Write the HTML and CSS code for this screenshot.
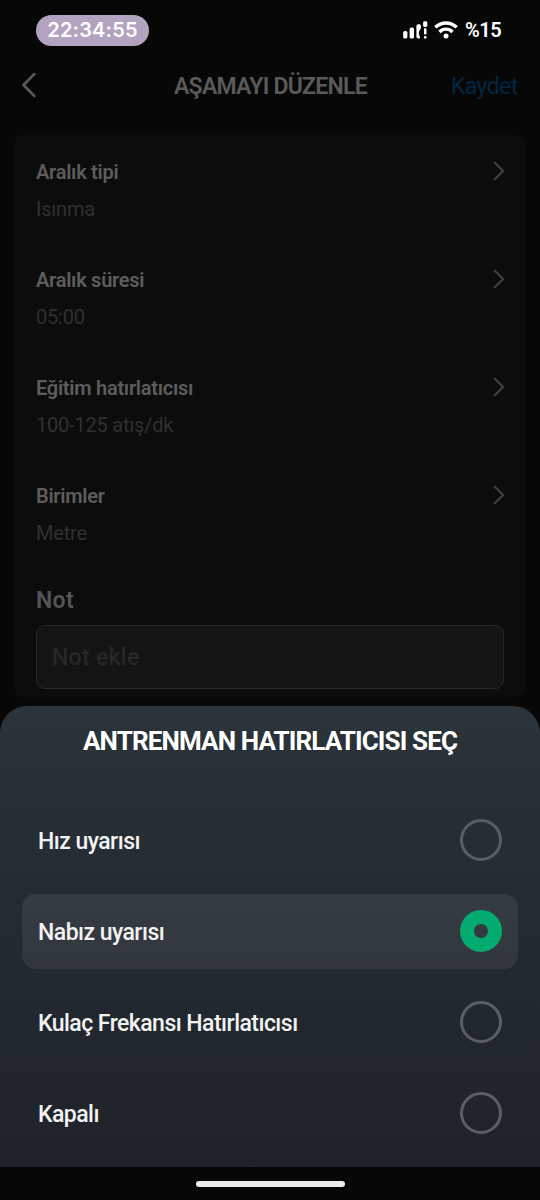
FILE: index.html
```
<!DOCTYPE html>
<html lang="tr">
<head>
<meta charset="utf-8">
<title>Aşamayı düzenle</title>
<link rel="stylesheet" href="styles.css">
</head>
<body>
<div class="screen">
  <div class="status">
    <span class="clock">22:34:55</span>
    <div class="status-icons">
      <svg class="signal" width="25" height="18" viewBox="0 0 25 18" fill="#fff">
        <rect x="0.2" y="10" width="4.2" height="7.6" rx="1.6"/>
        <rect x="6.6" y="6.6" width="4.4" height="11" rx="1.6"/>
        <path d="M15.200 3.200h1.200q1.500 0 1.500 1.500v2.600l-2 3.500v2.700l1.200 2.600q.3 1.500-1.200 1.500h-.7q-1.800 0-1.800-1.800V5q0-1.800 1.800-1.800Z"/>
        <rect x="20.100" y="0.300" width="4.200" height="5.700" rx="1.400"/>
        <rect x="21" y="7.200" width="2.500" height="6.300" rx=".8"/>
        <rect x="20.900" y="15" width="2.700" height="2.700" rx="1.100"/>
      </svg>
      <svg class="wifi" width="24" height="18" viewBox="0 0 24 18" fill="none" stroke="#fff" stroke-width="3.300">
        <path d="M1.300 6.300Q6 2 12 2t10.700 4.300"/>
        <path d="M5.500 11Q8.200 8.200 12 8.200T18.500 11"/>
        <circle cx="12" cy="15.100" r="2.500" fill="#fff" stroke="none"/>
      </svg>
      <span class="battery">%15</span>
    </div>
  </div>
  <header class="nav">
    <svg width="14" height="26" viewBox="0 0 14 26" fill="none" stroke="#5a5a5a" stroke-width="2.500" stroke-linecap="round" stroke-linejoin="round"><path d="M12.400 2 1.500 13l10.900 11"/></svg>
    <h1 class="nav-title">AŞAMAYI DÜZENLE</h1>
    <span class="save">Kaydet</span>
  </header>
  <main class="card">
    <div class="row">
      <div class="row-text"><span class="label">Aralık tipi</span><span class="value">Isınma</span></div>
      <svg class="chev" width="12" height="20" viewBox="0 0 12 20"><path d="m2.800 1.800 8.300 8.200-8.300 8.200"/></svg>
    </div>
    <div class="row">
      <div class="row-text"><span class="label">Aralık süresi</span><span class="value">05:00</span></div>
      <svg class="chev" width="12" height="20" viewBox="0 0 12 20"><path d="m2.800 1.800 8.300 8.200-8.300 8.200"/></svg>
    </div>
    <div class="row">
      <div class="row-text"><span class="label">Eğitim hatırlatıcısı</span><span class="value">100-125 atış/dk</span></div>
      <svg class="chev" width="12" height="20" viewBox="0 0 12 20"><path d="m2.800 1.800 8.300 8.200-8.300 8.200"/></svg>
    </div>
    <div class="row">
      <div class="row-text"><span class="label">Birimler</span><span class="value">Metre</span></div>
      <svg class="chev" width="12" height="20" viewBox="0 0 12 20"><path d="m2.800 1.800 8.300 8.200-8.300 8.200"/></svg>
    </div>
    <div class="note">
      <span class="note-label">Not</span>
      <div class="note-field"><span>Not ekle</span></div>
    </div>
  </main>
  <section class="sheet">
    <h2 class="sheet-title">ANTRENMAN HATIRLATICISI SEÇ</h2>
    <div class="options">
      <div class="option"><span>Hız uyarısı</span><i class="radio"></i></div>
      <div class="option selected"><span>Nabız uyarısı</span><i class="radio"></i></div>
      <div class="option"><span>Kulaç Frekansı Hatırlatıcısı</span><i class="radio"></i></div>
      <div class="option"><span>Kapalı</span><i class="radio"></i></div>
    </div>
  </section>
  <footer class="home"><div class="home-bar"></div></footer>
</div>
</body>
</html>
```
FILE: styles.css
```
* { box-sizing: border-box; }
body { margin: 0; background: #070707; font-family: Roboto, "Liberation Sans", sans-serif; }
h1, h2 { margin: 0; }
svg { display: block; flex: none; }
span { white-space: nowrap; }
.screen { width: 540px; height: 1200px; display: flex; flex-direction: column; overflow: hidden; }

.status { height: 60px; padding: 0 38px 0 36px; display: flex; justify-content: space-between; align-items: center; color: #fff; }
.clock { width: 113px; height: 31px; border-radius: 16px; background: #b2a3bf; font: 600 20px/31px Inter, sans-serif; text-align: center; letter-spacing: .2px; }
.status-icons { display: flex; align-items: center; }
.wifi { margin-left: 6px; }
.battery { margin-left: 7px; width: 37px; font-size: 20px; line-height: 24px; font-weight: 600; letter-spacing: -.5px; }

.nav { height: 75px; padding: 0 22px 25px; display: flex; align-items: center; }
.nav-title { margin-left: 138px; width: 193px; padding-top: 3px; font-size: 23px; line-height: 28px; font-weight: 600; color: #5a5a5a; white-space: nowrap; letter-spacing: -.75px; }
.save { margin-left: 84px; padding-top: 3px; font-size: 23px; line-height: 28px; color: #012542; letter-spacing: -.6px; }

.card { margin: 0 14px; height: 562px; flex: none; border-radius: 9px; background: #0c0c0c; padding: 25px 22px 0; }
.row { height: 108px; display: flex; justify-content: space-between; align-items: flex-start; }
.row-text { display: flex; flex-direction: column; gap: 13px; }
.label { font-size: 20px; line-height: 24px; font-weight: 600; color: #5d5d5d; letter-spacing: -.27px; }
.value { font-size: 20px; line-height: 24px; color: #303030; letter-spacing: -.2px; }
.chev { fill: none; stroke: #414141; stroke-width: 2.2; stroke-linecap: round; stroke-linejoin: round; margin-top: 1px; }
.note { margin-top: -5px; }
.note-label { display: block; height: 28px; font: 600 23px/28px Roboto, sans-serif; color: #555; letter-spacing: .3px; }
.note-field { margin-top: 10px; height: 64px; border: 1.500px solid #272727; border-radius: 9px; background: #131514; padding: 2px 0 0 15px; display: flex; align-items: center; font: 500 23px/28px Roboto, sans-serif; color: #272727; letter-spacing: .3px; }

.sheet { margin-top: 9px; height: 461px; flex: none; border-radius: 27px 27px 0 0; background: linear-gradient(#2a343a, #252c33 36%, #1e2329); padding: 21px 22px 15px; }
.sheet-title { height: 28px; font-size: 26px; line-height: 28px; font-weight: 700; color: #fff; text-align: center; letter-spacing: -.87px; }
.options { margin-top: 48px; display: flex; flex-direction: column; gap: 16px; }
.option { height: 75px; padding: 0 16px; border-radius: 14px; display: flex; justify-content: space-between; align-items: center; font-size: 23px; line-height: 28px; font-weight: 500; color: #f2f2f2; letter-spacing: -.54px; }
.option span { padding-top: 3px; }
.selected { background: linear-gradient(#343b41, #32373e); }
.radio { width: 42px; height: 42px; margin-bottom: 1px; border: 3px solid #5a5f63; border-radius: 50%; }
.selected .radio { border: 14px solid #03ab70; }
.home { height: 33px; display: flex; justify-content: center; align-items: center; }
.home-bar { width: 149px; height: 6px; border-radius: 3px; background: #ededed; }
```
